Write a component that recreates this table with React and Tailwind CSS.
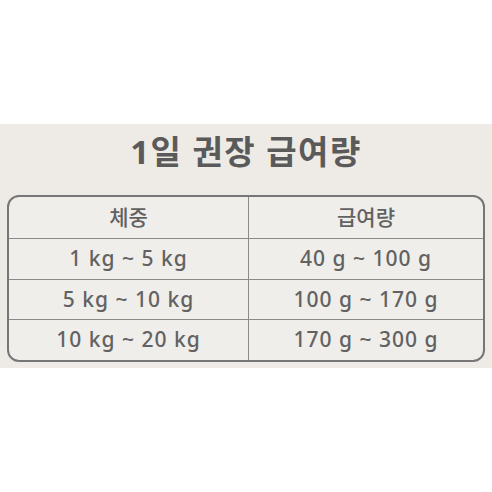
const rows = [
  ['1 kg ~ 5 kg', '40 g ~ 100 g'],
  ['5 kg ~ 10 kg', '100 g ~ 170 g'],
  ['10 kg ~ 20 kg', '170 g ~ 300 g'],
];

export default function App() {
  return (
    <div className="w-[492px] h-[492px] bg-white flex flex-col">
      <div className="mt-[124px] h-[244px] bg-[#eeebe6] px-[7px] pt-[8px] font-['Noto_Sans','Noto_Sans_CJK_KR',sans-serif] text-[#626262]">
        <h1 className="text-center text-[33px] font-bold leading-[40px] tracking-[1.5px] text-[#5a5a5a]">
          1일 권장 급여량
        </h1>
        <div className="mt-[23px] h-[167px] border-2 border-[#767676] rounded-[12px] flex flex-col overflow-hidden bg-[#f0eeea]">
          <div className="h-[42px] flex border-b-[1.5px] border-[#8a8a8a]">
            <div className="w-[240px] border-r-[1.5px] border-[#8a8a8a] flex items-center justify-center text-[21px] font-medium">체중</div>
            <div className="flex-1 flex items-center justify-center text-[21px] font-medium">급여량</div>
          </div>
          {rows.map(([w, g], i) => (
            <div key={i} className={`flex-1 flex ${i < rows.length - 1 ? 'border-b-[1.5px] border-[#8a8a8a]' : ''}`}>
              <div className="w-[240px] border-r-[1.5px] border-[#8a8a8a] flex items-center justify-center text-[21px] font-medium tracking-[1px]">{w}</div>
              <div className="flex-1 flex items-center justify-center text-[21px] font-medium tracking-[1px]">{g}</div>
            </div>
          ))}
        </div>
      </div>
    </div>
  );
}
